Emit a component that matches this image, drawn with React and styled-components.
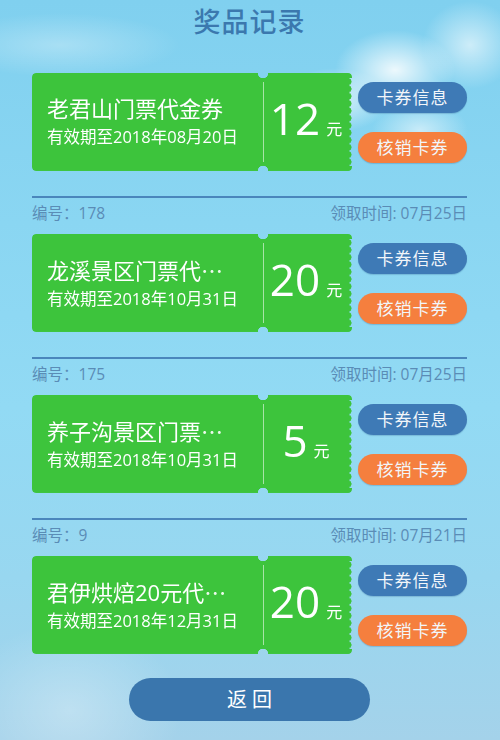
import styled, { createGlobalStyle } from "styled-components";

const GlobalStyle = createGlobalStyle`
  html, body {
    margin: 0;
    padding: 0;
  }
  body {
    font-family: "Open Sans", "Noto Sans CJK SC", sans-serif;
    background: #92d8f2;
  }
`;

// names are shown already cut to what fits the ticket
const records = [
  { id: null, name: "老君山门票代金券", cut: false, expire: "2018年08月20日", amount: 12 },
  { id: 178, time: "07月25日", name: "龙溪景区门票代", cut: true, expire: "2018年10月31日", amount: 20 },
  { id: 175, time: "07月25日", name: "养子沟景区门票", cut: true, expire: "2018年10月31日", amount: 5 },
  { id: 9, time: "07月21日", name: "君伊烘焙20元代", cut: true, expire: "2018年12月31日", amount: 20 },
];

const App = () => {
  return (
    <>
      <GlobalStyle />
      <Page>
        <Title>奖品记录</Title>
        {records.map((item, i) => (
          <Record key={i}>
            {item.id !== null && (
              <>
                <Divider />
                <Meta>
                  <span>编号：{item.id}</span>
                  <span>领取时间: {item.time}</span>
                </Meta>
              </>
            )}
            <TicketRow>
              <Ticket>
                <TicketBody>
                  <TicketName>
                    {item.name}
                    {item.cut && <Ellipsis>⋯</Ellipsis>}
                  </TicketName>
                  <TicketDate>有效期至{item.expire}</TicketDate>
                </TicketBody>
                <Perforation />
                <TicketStub>
                  <Amount>{item.amount}</Amount>
                  <Unit>元</Unit>
                </TicketStub>
              </Ticket>
              <Actions>
                <PillButton $tone="blue">卡券信息</PillButton>
                <PillButton $tone="orange">核销卡券</PillButton>
              </Actions>
            </TicketRow>
          </Record>
        ))}
        <BackButton>返 回</BackButton>
      </Page>
    </>
  );
};

export default App;

const Page = styled.div`
  width: 500px;
  min-height: 740px;
  box-sizing: border-box;
  padding: 0 33px 0 32px;
  display: flex;
  flex-direction: column;
  background:
    radial-gradient(ellipse 75px 50px at 395px 70px, rgba(255,255,255,0.85), rgba(255,255,255,0) 80%),
    radial-gradient(ellipse 70px 40px at 335px 100px, rgba(255,255,255,0.7), rgba(255,255,255,0) 80%),
    radial-gradient(ellipse 60px 55px at 470px 45px, rgba(255,255,255,0.6), rgba(255,255,255,0) 80%),
    radial-gradient(ellipse 60px 35px at 420px 130px, rgba(255,255,255,0.55), rgba(255,255,255,0) 80%),
    radial-gradient(ellipse 150px 40px at 60px 45px, rgba(255,255,255,0.3), rgba(255,255,255,0) 80%),
    radial-gradient(ellipse 140px 110px at 70px 710px, rgba(255,255,255,0.3), rgba(255,255,255,0) 80%),
    linear-gradient(180deg, #80d0ef 0%, #8ad6f2 30%, #92daf4 55%, #98d7f0 78%, #a4d2ea 100%);
`;

const Title = styled.h1`
  margin: 0 0 29px;
  height: 44px;
  line-height: 44px;
  text-align: center;
  font-size: 27px;
  font-weight: 500;
  color: #3b78ae;
  letter-spacing: 1px;
`;

const Record = styled.div`
  display: flex;
  flex-direction: column;

  & + & {
    margin-top: 25px;
  }
`;

const Divider = styled.div`
  height: 2px;
  background: #4a86bc;
`;

const Meta = styled.div`
  display: flex;
  justify-content: space-between;
  margin: 5px 0 11px;
  line-height: 20px;
  font-size: 15.5px;
  color: #5a8cb6;
`;

const TicketRow = styled.div`
  display: flex;
  align-items: center;
`;

// notches above and below the perforation, round bumps along the right edge
const ticketMask = `
  radial-gradient(circle at 231px 0, transparent 5px, #000 5.5px) left top / calc(100% - 4px) 51% no-repeat,
  radial-gradient(circle at 231px 100%, transparent 5px, #000 5.5px) left bottom / calc(100% - 4px) 51% no-repeat,
  linear-gradient(#000, #000) right top / 4px 5px no-repeat,
  linear-gradient(#000, #000) right bottom / 4px 5px no-repeat,
  radial-gradient(circle at 0 50%, #000 3.3px, transparent 3.8px) right 5px / 4px 7.3px repeat-y
`;

const Ticket = styled.div`
  flex: 0 0 320px;
  height: 98px;
  display: flex;
  background: #3dc43c;
  border-radius: 4px;
  -webkit-mask: ${ticketMask};
  mask: ${ticketMask};
  color: #fff;
`;

const TicketBody = styled.div`
  flex: 0 0 231px;
  box-sizing: border-box;
  padding: 20px 0 0 15px;
  display: flex;
  flex-direction: column;
`;

const TicketName = styled.div`
  font-size: 22px;
  line-height: 30px;
  white-space: nowrap;
`;

const Ellipsis = styled.span`
  font-family: "Noto Sans CJK SC", sans-serif;
  color: rgba(255, 255, 255, 0.9);
`;

const TicketDate = styled.div`
  margin-top: 2px;
  font-size: 16.5px;
  line-height: 24px;
  white-space: nowrap;
`;

const Perforation = styled.div`
  width: 1px;
  margin: 9px 0;
  background: rgba(255, 255, 255, 0.55);
`;

const TicketStub = styled.div`
  flex: 1;
  display: flex;
  justify-content: center;
  align-items: baseline;
  padding-top: 16px;
  padding-right: 4px;
`;

const Amount = styled.span`
  font-size: 44px;
  line-height: 58px;
`;

const Unit = styled.span`
  margin-left: 6px;
  font-size: 16px;
`;

const Actions = styled.div`
  margin-left: 6px;
  width: 109px;
  display: flex;
  flex-direction: column;
  gap: 19px;
`;

const PillButton = styled.div`
  height: 31px;
  line-height: 31px;
  border-radius: 16px;
  text-align: center;
  font-size: 17px;
  letter-spacing: 1px;
  color: #f2f6fa;
  background: ${(p) => (p.$tone === "orange" ? "#f57f3e" : "#3e7ab6")};
  box-shadow: 0 1px 1px rgba(40, 90, 140, 0.25);
`;

const BackButton = styled.div`
  align-self: center;
  margin: 24px 0 19px;
  width: 241px;
  height: 43px;
  line-height: 43px;
  border-radius: 22px;
  text-align: center;
  font-size: 20px;
  color: #fff;
  background: #3a76ad;
`;
